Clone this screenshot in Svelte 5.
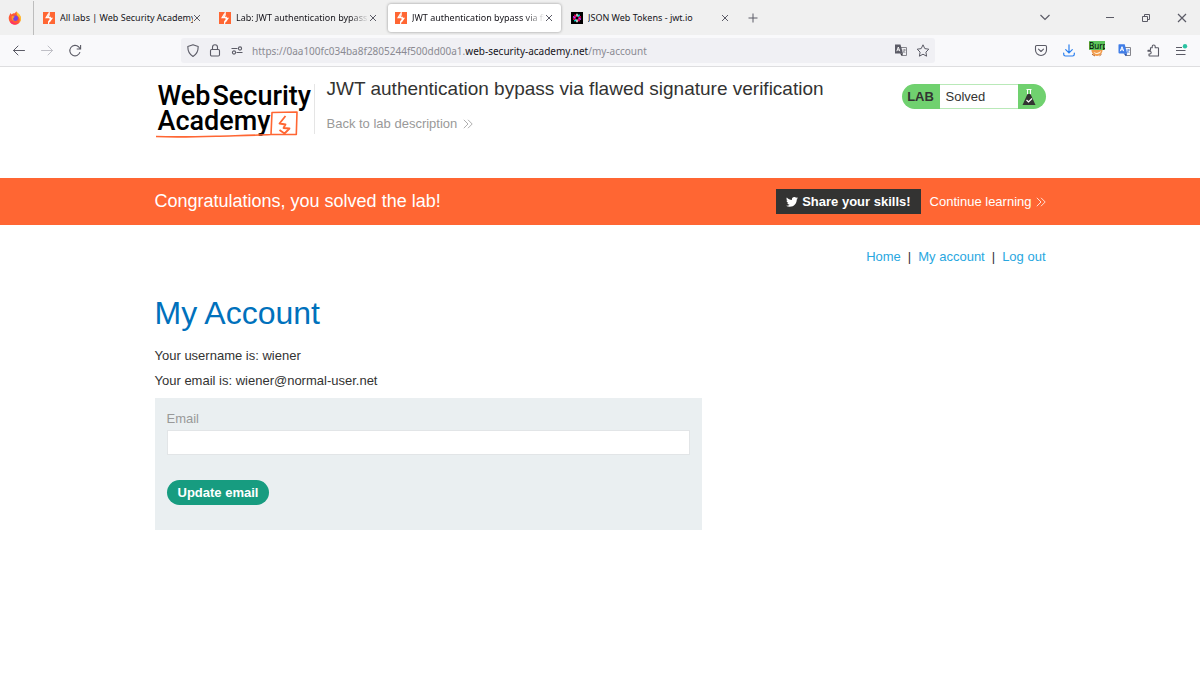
<script lang="ts">
  interface Tab {
    title: string;
    icon: 'burp' | 'jwt';
    active?: boolean;
  }

  const tabs: Tab[] = [
    { title: 'All labs | Web Security Academy', icon: 'burp' },
    { title: 'Lab: JWT authentication bypass via', icon: 'burp' },
    { title: 'JWT authentication bypass via flawed', icon: 'burp', active: true },
    { title: 'JSON Web Tokens - jwt.io', icon: 'jwt' }
  ];

  const links = ['Home', 'My account', 'Log out'];

  let email = $state('');
</script>

{#snippet chevrons()}
  <svg width="10" height="10" viewBox="0 0 10 10" fill="none" stroke="currentColor" stroke-width=".8">
    <path d="M.8.8 5 5 .8 9.2M5 .8 9.2 5 5 9.2" />
  </svg>
{/snippet}

<div class="tab-bar">
  <div class="pinned">
    <svg width="14" height="14" viewBox="0 0 14 14">
      <path d="M1 5.2 2.5 2l1 1.4C4.8 2.2 6 2 7 2.2 7.4 1 8.3.7 8.7.4c.2 1.8 2.2 2.2 3.1 3.8 1.3 2 1.5 4.9-.1 7C9 14.7 4 14.5 2 11.3.7 9.4.4 7.3 1 5.2z" fill="#ff5a36" />
      <path d="M8.7.4c.4 1.6 3 2.4 3.8 4.6.9 2.4.6 5.2-1.3 7 .9-2 .7-4.7-.6-6.2C10 5 8 3.5 8.7.4z" fill="#ffc22e" />
      <path d="M2 10.5c1.5 3.2 5.7 3.8 8.5 1.5-3 .8-5.3.1-6.400-2z" fill="#ff2f6c" />
      <circle cx="7.2" cy="7.3" r="2.7" fill="#7542e5" />
      <path d="M3.6 5.4c1.2-.6 2.2-.3 3.2.4L5.4 7c-.6.8-.1 2.200 1.300 2.500-2 .4-3.600-1.400-3.100-4.100z" fill="#ff9a2c" />
    </svg>
  </div>
  <div class="tabs">
    {#each tabs as tab}
      <div class="tab" class:active={tab.active}>
        {#if tab.icon === 'burp'}
          <svg width="12" height="12" viewBox="0 0 12 12">
            <path d="M0 0h12v12H0z" fill="#ff6633" />
            <path d="M6.2 0v3L4.7 5.300h2.600v2L5.600 9.700V12M5.600 1.500 3 5.800h3M6.300 10.200 9 6.200H6.200" fill="none" stroke="#fff" stroke-width="1.1" />
          </svg>
        {:else}
          <svg width="12" height="12" viewBox="0 0 12 12" fill="none" stroke-width="1.5">
            <path d="M0 0h12v12H0z" fill="#000" />
            <path d="M6 1.800v2.800M6 7.400v2.800" stroke="#fff" />
            <path d="M8.500 2.600 6.900 4.800M5.100 7.200 3.500 9.400" stroke="#00f2e6" />
            <path d="m10 4.700-2.600.8M4.600 6.500 2 7.300" stroke="#fb015b" />
            <path d="m10 7.300-2.600-.8M4.600 5.500 2 4.700" stroke="#d63aff" />
            <path d="M8.500 9.400 6.900 7.200M5.100 4.800 3.500 2.600" stroke="#fb015b" />
          </svg>
        {/if}
        <span class="tab-title">{tab.title}</span>
        <button class="icon-button" aria-label="Close tab">
          <svg width="8" height="8" viewBox="0 0 8 8" fill="none" stroke="currentColor">
            <path d="m1 1 6 6M7 1 1 7" />
          </svg>
        </button>
      </div>
    {/each}
  </div>
  <button class="icon-button new-tab" aria-label="New tab">
    <svg width="10" height="10" viewBox="0 0 10 10" fill="none" stroke="currentColor">
      <path d="M5 .5v9M.5 5h9" />
    </svg>
  </button>
  <div class="window-controls">
    <button class="icon-button list-tabs" aria-label="List all tabs">
      <svg width="10" height="10" viewBox="0 0 10 10" fill="none" stroke="currentColor" stroke-width="1.2">
        <path d="M.5 2 5 6.500 9.500 2" />
      </svg>
    </button>
    <button class="icon-button" aria-label="Minimize">
      <svg width="10" height="10" viewBox="0 0 10 10" fill="none" stroke="currentColor">
        <path d="M1 4.500h8" />
      </svg>
    </button>
    <button class="icon-button" aria-label="Restore">
      <svg width="10" height="10" viewBox="0 0 10 10" fill="none" stroke="currentColor">
        <path d="M1.500 3.500h5v5h-5zM3.500 3.500v-2h5v5h-2" />
      </svg>
    </button>
    <button class="icon-button" aria-label="Close window">
      <svg width="10" height="10" viewBox="0 0 10 10" fill="none" stroke="currentColor" stroke-width="1.2">
        <path d="m1 1 8 8M9 1 1 9" />
      </svg>
    </button>
  </div>
</div>

<div class="toolbar">
  <div class="nav-buttons">
    <button class="icon-button" aria-label="Back">
      <svg width="14" height="14" viewBox="0 0 14 14" fill="none" stroke="currentColor" stroke-linecap="round">
        <path d="M12.500 6.500h-11M6 2 1.500 6.500 6 11" />
      </svg>
    </button>
    <button class="icon-button" aria-label="Forward" disabled>
      <svg width="14" height="14" viewBox="0 0 14 14" fill="none" stroke="currentColor" stroke-linecap="round">
        <path d="M1.500 6.500h11M8 2l4.500 4.500L8 11" />
      </svg>
    </button>
    <button class="icon-button" aria-label="Reload">
      <svg width="14" height="14" viewBox="0 0 14 14" fill="none" stroke="currentColor" stroke-width="1.1">
        <path d="M12 8.200A5.200 5.200 0 1 1 10.800 3L12.500 5M12.600 1v4H8.700" />
      </svg>
    </button>
  </div>
  <div class="url-bar">
    <svg width="14" height="14" viewBox="0 0 14 14" fill="none" stroke="currentColor" stroke-width="1.1" stroke-linejoin="round">
      <path d="M7 .8 12.200 2.600c0 5-1.700 8-5.200 9.800C3.500 10.600 1.800 7.600 1.800 2.600z" />
    </svg>
    <svg width="14" height="14" viewBox="0 0 14 14" fill="none" stroke="currentColor" stroke-width="1.1">
      <rect x="2.500" y="5.500" width="9" height="6.500" rx="1.200" />
      <path d="M4.500 5.500V3.300a2.500 2.500 0 0 1 5 0v2.200" />
    </svg>
    <svg width="14" height="14" viewBox="0 0 14 14" fill="none" stroke="currentColor" stroke-width="1.1">
      <path d="M1.500 4.500h6M6.500 8.500h6" />
      <circle cx="10" cy="4.500" r="1.600" />
      <circle cx="4" cy="8.500" r="1.600" />
    </svg>
    <div class="url">https://0aa100fc034ba8f2805244f500dd00a1.<strong>web-security-academy.net</strong>/my-account</div>
    <button class="icon-button" aria-label="Translate page">
      <svg width="14" height="14" viewBox="0 0 14 14" fill="none">
        <path d="M6.500 3.500h6v8h-5" stroke="#85858c" />
        <path d="M1 .5h5.500L9 9.500H1z" fill="#5b5b66" />
        <path d="M9 9.500H6L8 12z" fill="#38383d" />
        <path d="m2.800 7.200 1.500-4.200 1.500 4.200M3.300 5.900h2" stroke="#fff" stroke-width=".9" />
        <path d="M8.500 6H12M10.300 5v1c0 1.500-.7 2.500-1.500 3M9.300 7l2 2" stroke="#85858c" stroke-width=".8" />
      </svg>
    </button>
    <button class="icon-button" aria-label="Bookmark this page">
      <svg width="14" height="14" viewBox="0 0 14 14" fill="none" stroke="currentColor" stroke-linejoin="round">
        <path d="m7 .8 1.800 3.800 4 .6-2.900 2.900.7 4.100L7 10.200l-3.600 2 .7-4.100L1.200 5.200l4-.6z" />
      </svg>
    </button>
  </div>
  <div class="extensions">
    <button class="icon-button" aria-label="Save to Pocket">
      <svg width="14" height="14" viewBox="0 0 14 14" fill="none" stroke="currentColor" stroke-width="1.1" stroke-linejoin="round">
        <path d="M2.700 1.500h8.600q1.200 0 1.200 1.200V6a5.500 5.500 0 0 1-11 0V2.700Q1.500 1.500 2.700 1.500z" />
        <path d="M4.500 5.200 7 7.500l2.500-2.300" stroke-linecap="round" />
      </svg>
    </button>
    <button class="icon-button download" aria-label="Downloads">
      <svg width="14" height="14" viewBox="0 0 14 14" fill="none" stroke="currentColor" stroke-width="1.2" stroke-linecap="round">
        <path d="M7 .8V8.600M3.700 5.600 7 8.900l3.300-3.300M1.700 9v1.300q0 1.700 1.700 1.700h7.200q1.700 0 1.700-1.700V9" />
      </svg>
    </button>
    <button class="icon-button foxy" aria-label="FoxyProxy">
      <svg width="14" height="14" viewBox="0 0 14 14">
        <path d="M1.500 4h11c.7 4-1.700 8-5.500 8S.8 8 1.500 4z" fill="#f29b4b" />
        <path d="M3.500 7.800c2 1.800 5 1.500 7.500-1-.3 3.800-6 4.500-7.500 1z" fill="#fff0dc" />
        <path d="m2 10.300 3 1.700M9.500 11.800l2-1.500" stroke="#b86226" />
      </svg>
      <span class="foxy-badge">Burp</span>
    </button>
    <button class="icon-button" aria-label="Google Translate">
      <svg width="14" height="14" viewBox="0 0 14 14" fill="none">
        <path d="M6.500 3.500h6v8h-5" stroke="#85858c" />
        <path d="M1 .3h5.700l2.500 9.200H1.500q-1 0-1-1V1q0-.7.5-.7z" fill="#3f7de8" />
        <path d="M9.200 9.500H5.500L8 12.300z" fill="#2455b8" />
        <path d="m2.300 7.200 1.700-4.500 1.700 4.500M2.800 5.800h2.400" stroke="#fff" />
        <path d="M8.500 6H12M10.300 5v1c0 1.500-.7 2.500-1.500 3M9.300 7l2 2" stroke="#5b8be0" stroke-width=".8" />
      </svg>
    </button>
    <button class="icon-button" aria-label="Extensions">
      <svg width="14" height="14" viewBox="0 0 14 14" fill="none" stroke="currentColor" stroke-width="1.1" stroke-linejoin="round">
        <path d="M4.500 3.800h1.700V2.500a1.500 1.500 0 0 1 3 0v1.300H12q.5 0 .5.500v7.700H3.500q-.5 0-.5-.5V10h.8a1.400 1.400 0 0 0 0-2.800H2V6.300h2.500z" />
      </svg>
    </button>
    <button class="icon-button" aria-label="Application menu">
      <svg width="14" height="14" viewBox="0 0 14 14" fill="none" stroke="currentColor">
        <path d="M2 3.500h6M2 6.500h9.500M2 10.500h9.500" />
        <circle cx="11" cy="2.200" r="2.200" fill="#2ac3a2" stroke="none" />
      </svg>
    </button>
  </div>
</div>

<header class="container lab-header">
  <a class="logo" href="/" aria-label="Web Security Academy">
    <span class="logo-line"><span>Web</span><span>Security</span></span>
    <span class="logo-line">Academy</span>
    <svg class="logo-mark" width="144" height="30" viewBox="0 0 144 30" fill="none" stroke="#ff6633" stroke-linejoin="round">
      <path d="M1 27.500c20 .8 40 .3 60-.3s38-.8 55-1.700L117 3.500l25-.5-.7 22.500-25-.2" stroke-width="1.6" />
      <path d="m130.500 7-6 7.500 6 1-2 3.500 6 .5-5 5-5-3.500" stroke-width="1.8" />
    </svg>
  </a>
  <div class="lab-title">
    <h2>JWT authentication bypass via flawed signature verification</h2>
    <a href="/lab">Back to lab description {@render chevrons()}</a>
  </div>
  <div class="status">
    <strong>LAB</strong>
    <span class="status-text">Solved</span>
    <svg width="28" height="26" viewBox="0 0 28 26">
      <path d="M8.500 5.500h5M9.500 6v5M12.500 6v5" fill="none" stroke="#fff" />
      <path d="M9.500 10h3l5 11h-13z" fill="#333332" />
      <path d="m8.500 16 2 2 3.500-3.500" fill="none" stroke="#fff" stroke-width="1.2" />
    </svg>
  </div>
</header>

<section class="banner">
  <div class="container banner-content">
    <p class="congrats">Congratulations, you solved the lab!</p>
    <button class="share">
      <svg width="12" height="10" viewBox="0 0 24 20" fill="#fff">
        <path d="M24 2.400c-.9.4-1.800.6-2.800.8 1-.6 1.800-1.600 2.200-2.700-1 .6-2 1-3.100 1.200A4.900 4.900 0 0 0 11.900 6C7.700 5.900 4.100 3.900 1.700.9.4 3.100 1 6 3.200 7.500c-.8 0-1.600-.2-2.200-.6 0 2.300 1.600 4.400 3.900 4.900-.7.2-1.500.2-2.200.1.6 2 2.400 3.400 4.600 3.400A9.900 9.900 0 0 1 0 17.300 14 14 0 0 0 7.500 19.500c9.100 0 14.300-7.700 14-14.600 1-.7 1.800-1.600 2.500-2.500z" />
      </svg>
      Share your skills!
    </button>
    <a class="continue" href="/learning">Continue learning {@render chevrons()}</a>
  </div>
</section>

<main class="container">
  <nav class="account-links">
    {#each links as link, i}
      {#if i > 0}<span>|</span>{/if}
      <a href="/{link.toLowerCase().replace(' ', '-')}">{link}</a>
    {/each}
  </nav>

  <h1>My Account</h1>
  <p>Your username is: wiener</p>
  <p>Your email is: wiener@normal-user.net</p>

  <form class="email-form" onsubmit={(e) => e.preventDefault()}>
    <label for="email">Email</label>
    <input id="email" type="email" bind:value={email} />
    <button type="submit">Update email</button>
  </form>
</main>

<style>
  :global(body) {
    background-color: #fff;
    color: #333332;
    font-family: 'Liberation Sans', Arial, sans-serif;
    font-size: 13px;
    line-height: 25px;
  }

  svg {
    display: block;
    flex-shrink: 0;
  }

  a {
    text-decoration: none;
  }

  button {
    border: 0;
    cursor: pointer;
    font-family: inherit;
  }

  .icon-button {
    display: flex;
    padding: 0;
    background: none;
    color: #5b5b66;
  }

  .icon-button:disabled {
    color: #bfbfc6;
  }

  /* Browser chrome */
  .tab-bar,
  .toolbar {
    display: flex;
    align-items: center;
    font-family: 'Noto Sans', 'Segoe UI', sans-serif;
    line-height: 16px;
  }

  .tab-bar {
    height: 35px;
    background-color: #f0f0f0;
    color: #15141a;
    font-size: 9px;
  }

  .pinned {
    box-sizing: border-box;
    width: 34px;
    height: 34px;
    padding: 10px 8px;
    border-right: 1px solid #bdbdbd;
  }

  .tabs {
    display: flex;
    gap: 3px;
    margin-left: 2px;
  }

  .tab {
    display: flex;
    align-items: center;
    box-sizing: border-box;
    width: 173px;
    height: 28px;
    padding: 0 8px 0 7px;
    border-radius: 3px;
  }

  .tab.active {
    background-color: #fff;
    box-shadow: 0 0 3px rgba(0, 0, 0, 0.4);
  }

  .tab-title {
    flex: 1;
    margin-left: 5px;
    overflow: hidden;
    white-space: nowrap;
    mask-image: linear-gradient(to left, transparent, #000 20px);
  }

  .tab:first-child .tab-title,
  .tab:last-child .tab-title {
    mask-image: none;
  }

  .new-tab {
    margin-left: 11px;
  }

  .window-controls {
    display: flex;
    gap: 26px;
    margin-left: auto;
    padding-right: 13px;
  }

  .list-tabs {
    margin-right: 29px;
  }

  .toolbar {
    box-sizing: border-box;
    height: 32px;
    border-bottom: 1px solid #dedee0;
    background-color: #f9f9fb;
    font-size: 10px;
  }

  .nav-buttons {
    display: flex;
    gap: 14px;
    padding: 0 99px 0 12px;
  }

  .url-bar {
    display: flex;
    align-items: center;
    flex: 1;
    gap: 8px;
    height: 25px;
    padding: 0 5px;
    border-radius: 3px;
    background-color: #f0f0f4;
    color: #5b5b66;
  }

  .url {
    flex: 1;
    color: #8a8a92;
  }

  .url strong {
    color: #15141a;
    font-weight: 400;
  }

  .extensions {
    display: flex;
    gap: 14px;
    padding: 0 12px 0 99px;
  }

  .download {
    color: #2a7fef;
  }

  .foxy {
    position: relative;
  }

  .foxy-badge {
    position: absolute;
    top: -3px;
    left: -1px;
    width: 16px;
    overflow: hidden;
    background-color: #5cc45c;
    color: #000;
    font-size: 8px;
    line-height: 9px;
    text-align: left;
  }

  /* Lab page */
  .container {
    max-width: 891px;
    margin: 0 auto;
  }

  .lab-header {
    display: flex;
    align-items: flex-start;
    height: 94px;
    padding-top: 17px;
  }

  .logo {
    position: relative;
    box-sizing: border-box;
    width: 160px;
    padding-left: 3px;
    border-right: 1px solid #e5e5e5;
    color: #000;
    font-family: Roboto, sans-serif;
    font-size: 27px;
    font-weight: 500;
    line-height: 25px;
  }

  .logo-line {
    display: flex;
    gap: 2px;
  }

  .logo-mark {
    position: absolute;
    bottom: -5px;
    left: 0;
  }

  .lab-title {
    flex: 1;
    padding-left: 12px;
  }

  h2 {
    margin: -8px 0 10px;
    font-size: 19px;
    font-weight: 400;
    line-height: 25px;
  }

  .lab-title a,
  .continue {
    display: inline-flex;
    align-items: center;
    gap: 6px;
  }

  .lab-title a {
    color: #999;
  }

  .status {
    display: flex;
    height: 25px;
    border-radius: 13px;
    background-color: #70d16f;
    overflow: hidden;
  }

  .status strong {
    width: 38px;
    text-align: center;
  }

  .status-text {
    box-sizing: border-box;
    width: 78px;
    padding-left: 6px;
    border: solid #b9e9b8;
    border-width: 1px 0;
    background-color: #fff;
    line-height: 23px;
  }

  .banner {
    background-color: #ff6633;
    color: #fff;
  }

  .banner-content {
    display: flex;
    align-items: center;
    height: 47px;
  }

  .congrats {
    flex: 1;
    font-size: 18px;
  }

  .share {
    display: flex;
    align-items: center;
    gap: 4px;
    height: 25px;
    margin-right: 9px;
    padding: 0 10px;
    background-color: #333332;
    color: #fff;
    font-size: 13px;
    font-weight: 700;
  }

  .continue {
    gap: 4px;
    color: #fff;
  }

  .account-links {
    display: flex;
    justify-content: flex-end;
    gap: 7px;
    padding-top: 19px;
  }

  .account-links a {
    color: #29a7df;
  }

  h1 {
    margin: 24px 0 10px;
    color: #0071bc;
    font-size: 32px;
    font-weight: 400;
    line-height: 40px;
  }

  p {
    margin: 0;
  }

  .email-form {
    display: flex;
    flex-direction: column;
    align-items: flex-start;
    box-sizing: border-box;
    max-width: 547px;
    margin-top: 5px;
    padding: 10px 12px 25px;
    background-color: #eaeff1;
  }

  .email-form label {
    color: #999;
    line-height: 22px;
  }

  .email-form input {
    box-sizing: border-box;
    width: 100%;
    height: 25px;
    margin-bottom: 25px;
    border: 1px solid #e2e5e7;
    background-color: #fff;
  }

  .email-form button {
    height: 25px;
    padding: 0 11px;
    border-radius: 13px;
    background-color: #179c80;
    color: #fff;
    font-size: 13px;
    font-weight: 700;
  }
</style>
